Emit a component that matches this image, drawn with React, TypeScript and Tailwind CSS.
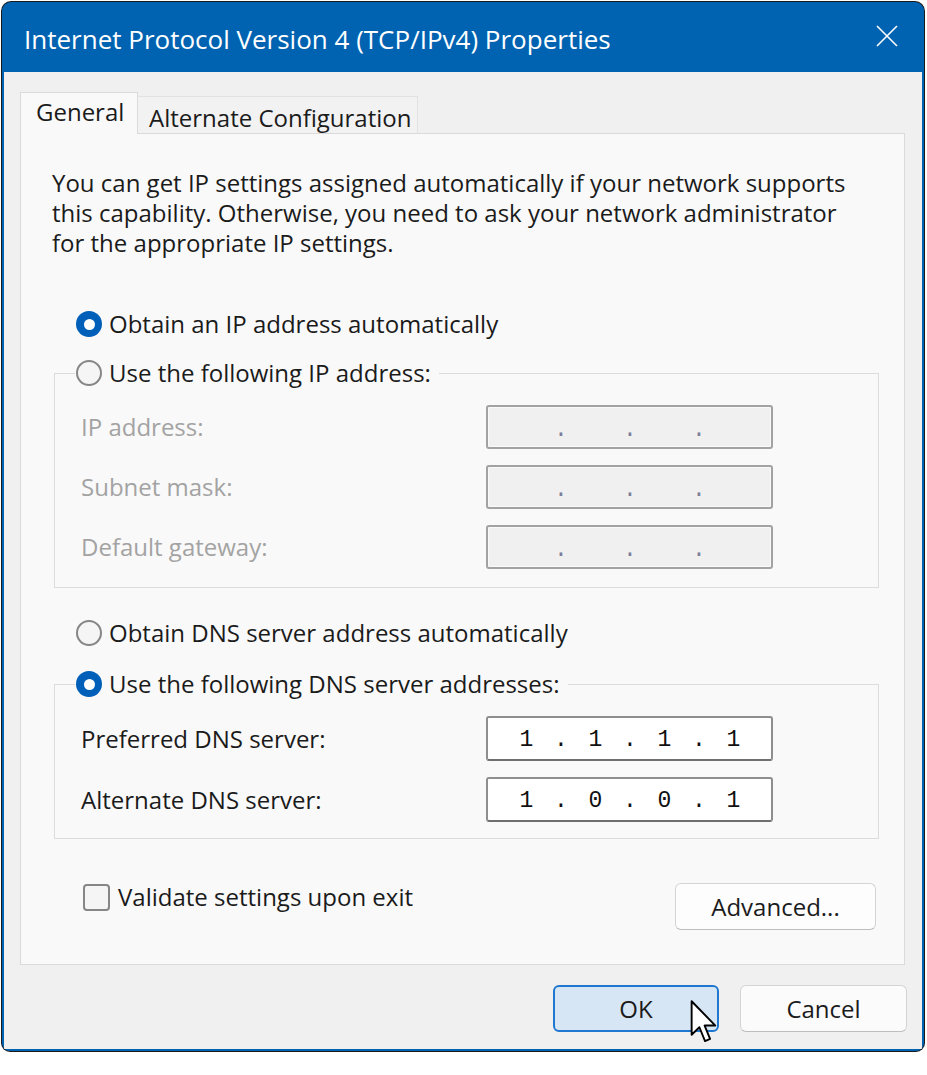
import { Fragment } from 'react'

function Radio({ checked }: { checked?: boolean }) {
  if (checked) {
    return (
      <span className="w-[26px] h-[26px] shrink-0 rounded-full bg-[#005fb8] flex items-center justify-center">
        <span className="w-[11px] h-[11px] rounded-full bg-white" />
      </span>
    )
  }
  return <span className="w-[26px] h-[26px] shrink-0 rounded-full border-2 border-[#868686] bg-[#f5f5f5]" />
}

function IpBox({ values, disabled }: { values: string[]; disabled?: boolean }) {
  return (
    <div
      className={
        disabled
          ? 'w-[287px] h-[44px] flex items-center pl-[11px] pt-[6px] rounded-[3px] border-2 border-[#a2a2a2] bg-[#f0f0f0] shadow-[inset_0_0_0_1px_#fafafa] text-[#7c7f99]'
          : 'w-[287px] h-[45px] flex items-center pl-[11px] pt-[4px] rounded-[3px] border-2 border-[#8e8e8e] border-b-[#6f6f6f] bg-white text-[#111]'
      }
    >
      {values.map((v, i) => (
        <Fragment key={i}>
          <span className="w-[55px] text-center font-['Liberation_Mono',monospace] text-[23px] leading-none">{v}</span>
          {i < 3 && (
            <span className="w-[14px] text-center font-['Liberation_Mono',monospace] text-[23px] leading-none">.</span>
          )}
        </Fragment>
      ))}
    </div>
  )
}

function Row({ label, values, disabled }: { label: string; values: string[]; disabled?: boolean }) {
  return (
    <div className="flex items-center">
      <span className={disabled ? 'w-[405px] text-[#a3a3a3]' : 'w-[405px] text-[#1b1b1b]'}>{label}</span>
      <IpBox values={values} disabled={disabled} />
    </div>
  )
}

export default function App() {
  return (
    <div className="min-h-screen bg-white pl-px pt-px font-['Open_Sans',sans-serif] text-[24px] text-[#1b1b1b]">
      {/* window frame */}
      <div className="w-[924px] h-[1051px] bg-[#1a1a1a] p-px rounded-t-[10px] rounded-b-[9px]">
        <div className="h-full flex flex-col bg-[#0063b1] rounded-t-[9px] rounded-b-[8px] overflow-hidden px-[2px] pb-[2px]">
          {/* title bar */}
          <div className="h-[70px] shrink-0 flex items-center justify-between pl-[20px] pr-[24px] text-white">
            <span className="text-[26px] leading-none pt-[4px]">Internet Protocol Version 4 (TCP/IPv4) Properties</span>
            <svg width="22" height="22" viewBox="0 0 22 22" className="mt-[-2px]">
              <path d="M1 1 L21 21 M21 1 L1 21" stroke="white" strokeWidth="1.6" fill="none" />
            </svg>
          </div>

          {/* body */}
          <div className="flex-1 flex flex-col bg-[#f0f0f0] pt-[20px]">
            {/* tabs */}
            <div className="flex items-end ml-[16px] h-[41px]">
              <div className="relative z-10 -mb-px w-[118px] h-[42px] flex items-center pl-[15px] pb-[3px] bg-[#f9f9f9] border border-b-0 border-[#dadada]">
                General
              </div>
              <div className="w-[280px] h-[37px] flex items-center pl-[11px] pt-[5px] bg-[#f2f2f2] border border-b-0 border-l-0 border-[#e2e2e2]">
                Alternate Configuration
              </div>
            </div>

            {/* tab panel */}
            <div className="ml-[16px] mr-[17px] h-[832px] flex flex-col border border-[#dadada] bg-[#f9f9f9]">
              <p className="mt-[34px] pl-[31px] leading-[30px] whitespace-nowrap">
                You can get IP settings assigned automatically if your network supports
                <br />
                this capability. Otherwise, you need to ask your network administrator
                <br />
                for the appropriate IP settings.
              </p>

              <div className="mt-[51px] h-[30px] flex items-center gap-[7px] pl-[55px]">
                <Radio checked />
                <span>Obtain an IP address automatically</span>
              </div>

              <fieldset className="mt-[19px] ml-[33px] mr-[25px] border border-[#dcdcdc]">
                <legend className="ml-[20px] pl-px pr-[8px] h-[30px] flex items-center gap-[7px]">
                  <Radio />
                  <span>Use the following IP address:</span>
                </legend>
                <div className="flex flex-col gap-[16px] pt-[17px] pb-[18px] pl-[26px]">
                  <Row label="IP address:" values={['', '', '', '']} disabled />
                  <Row label="Subnet mask:" values={['', '', '', '']} disabled />
                  <Row label="Default gateway:" values={['', '', '', '']} disabled />
                </div>
              </fieldset>

              <div className="mt-[30px] h-[30px] flex items-center gap-[7px] pl-[55px]">
                <Radio />
                <span>Obtain DNS server address automatically</span>
              </div>

              <fieldset className="mt-[21px] ml-[33px] mr-[25px] border border-[#dcdcdc]">
                <legend className="ml-[20px] pl-px pr-[8px] h-[30px] flex items-center gap-[7px]">
                  <Radio checked />
                  <span>Use the following DNS server addresses:</span>
                </legend>
                <div className="flex flex-col gap-[16px] pt-[17px] pb-[16px] pl-[26px]">
                  <Row label="Preferred DNS server:" values={['1', '1', '1', '1']} />
                  <Row label="Alternate DNS server:" values={['1', '0', '0', '1']} />
                </div>
              </fieldset>

              <div className="mt-[43px] flex items-start justify-between pl-[62px] pr-[28px]">
                <div className="h-[30px] flex items-center gap-[8px]">
                  <span className="w-[27px] h-[27px] rounded-[4px] border-2 border-[#868686] bg-[#f5f5f5]" />
                  <span>Validate settings upon exit</span>
                </div>
                <button className="mt-px w-[201px] h-[47px] rounded-[6px] border border-[#d4d4d4] border-b-[#bdbdbd] bg-[#fdfdfd]">
                  Advanced...
                </button>
              </div>
            </div>

            {/* dialog buttons */}
            <div className="mt-[20px] flex justify-end gap-[21px] pr-[15px]">
              <button className="relative w-[166px] h-[47px] rounded-[6px] border-2 border-[#1f77cf] bg-[#d7e6f4]">
                OK
                <svg width="28" height="44" viewBox="0 0 13 21" className="absolute left-[135px] top-[13px]">
                  <path
                    d="M0.6 0.6 V16.6 L4.3 13 L7 19.6 L9.4 18.6 L6.8 12.2 H11.9 Z"
                    fill="white"
                    stroke="black"
                    strokeWidth="0.9"
                    strokeLinejoin="round"
                  />
                </svg>
              </button>
              <button className="w-[167px] h-[47px] rounded-[6px] border border-[#d4d4d4] border-b-[#bdbdbd] bg-[#fbfbfb]">
                Cancel
              </button>
            </div>
          </div>
        </div>
      </div>
    </div>
  )
}
